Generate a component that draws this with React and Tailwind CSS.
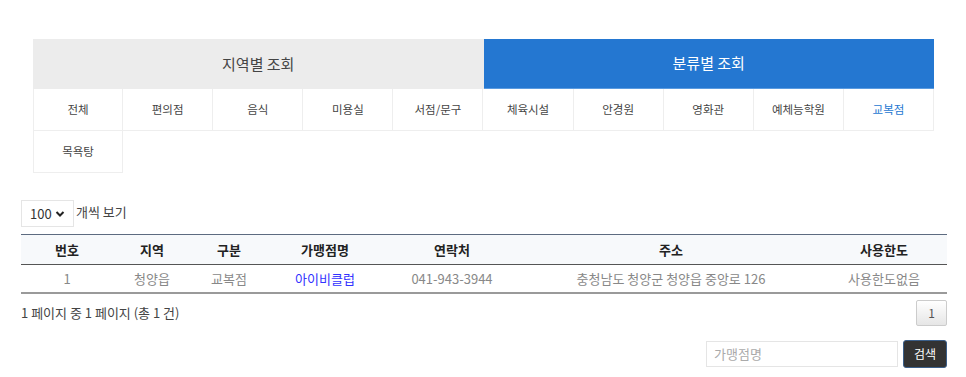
const categories = ['전체', '편의점', '음식', '미용실', '서점/문구', '체육시설', '안경원', '영화관', '예체능학원', '교복점', '목욕탕'];

const columns = [
  { label: '번호', w: 'w-[92px]' },
  { label: '지역', w: 'w-[78px]' },
  { label: '구분', w: 'w-[76px]' },
  { label: '가맹점명', w: 'w-[116px]' },
  { label: '연락처', w: 'w-[138px]' },
  { label: '주소', w: 'w-[300px]' },
  { label: '사용한도', w: '' },
];

const row = ['1', '청양읍', '교복점', '아이비클럽', '041-943-3944', '충청남도 청양군 청양읍 중앙로 126', '사용한도없음'];

export default function App() {
  return (
    <div className="w-[966px] h-[377px] bg-white font-['Noto_Sans_CJK_KR',sans-serif] text-[#333]">
      <div className="pt-[39px] px-[33px] w-[967px]">
        <div className="flex h-[50px] text-[15px]">
          <div className="flex-1 flex items-center justify-center bg-[#ececec] text-[#444]">지역별 조회</div>
          <div className="flex-1 flex items-center justify-center bg-[#2477d1] text-white border-b border-[#5a9be0]">분류별 조회</div>
        </div>
        <div className="grid grid-cols-10">
          {categories.map((c) => (
            <div
              key={c}
              className={`h-[42px] flex items-center justify-center text-[11.5px] border-r border-b border-[#eeeeee] first:border-l [&:nth-child(11)]:border-l ${
                c === '교복점' ? 'text-[#2477d1]' : 'text-[#444]'
              }`}
            >
              {c}
            </div>
          ))}
        </div>
      </div>

      <div className="px-[21px] w-[968px]">
        <div className="flex items-center mt-[27px] h-[27px]">
          <div className="w-[53px] h-[27px] border border-[#e5e5e5] flex items-center pl-[8px] gap-[3px] text-[13px] text-[#333]">
            100
            <svg width="10" height="8" viewBox="0 0 10 8">
              <path d="M1.5 2 L5 5.5 L8.5 2" fill="none" stroke="#222" strokeWidth="2" />
            </svg>
          </div>
          <span className="ml-[2px] -mt-[3px] text-[13px] text-[#444]">개씩 보기</span>
        </div>

        <table className="mt-[7px] w-full border-collapse text-[13px]">
          <thead>
            <tr className="h-[30px] bg-[#f7f9fb] border-t border-[#5d6b80] border-b border-b-[#555]">
              {columns.map((c) => (
                <th key={c.label} className={`${c.w} font-bold text-[#222]`}>{c.label}</th>
              ))}
            </tr>
          </thead>
          <tbody>
            <tr className="h-[28px] border-b-2 border-[#9a9a9a]">
              {row.map((v, i) => (
                <td key={i} className={`text-center ${i === 3 ? 'text-[#3333ff]' : 'text-[#888]'}`}>{v}</td>
              ))}
            </tr>
          </tbody>
        </table>

        <div className="flex items-center justify-between mt-[6px] h-[26px]">
          <span className="text-[13px] text-[#444]">1 페이지 중 1 페이지 (총 1 건)</span>
          <button className="w-[31px] h-[26px] border border-[#ccc] rounded-[2px] bg-gradient-to-b from-white to-[#e6e6e6] text-[12px] text-[#555]">1</button>
        </div>

        <div className="flex justify-end items-center gap-[5px] mt-[14px]">
          <input
            placeholder="가맹점명"
            className="w-[192px] h-[26px] border border-[#e5e5e5] px-[7px] text-[13px] placeholder:text-[#aaa] outline-none"
          />
          <button className="w-[44px] h-[28px] bg-[#333] border border-[#3b5f8a] rounded-[3px] text-white text-[12px]">검색</button>
        </div>
      </div>
    </div>
  );
}
